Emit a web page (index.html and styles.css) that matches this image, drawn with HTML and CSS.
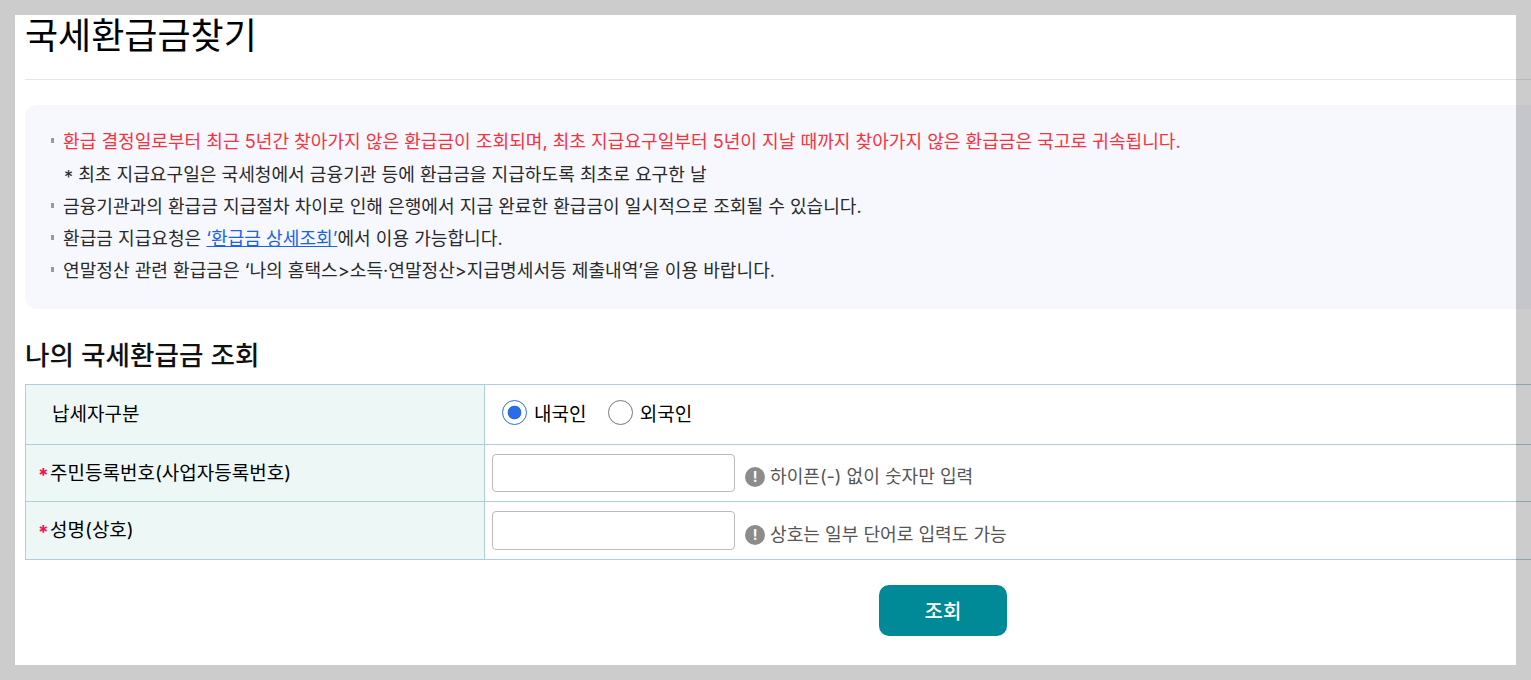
FILE: index.html
```html
<!DOCTYPE html>
<html lang="ko">
<head>
<meta charset="utf-8">
<title>국세환급금찾기</title>
<link rel="stylesheet" href="styles.css">
</head>
<body>
<main class="page">
  <h1 class="title">국세환급금찾기</h1>
  <section class="notice">
    <ul class="notice-list">
      <li class="item warn">환급 결정일로부터 최근 5년간 찾아가지 않은 환급금이 조회되며, 최초 지급요구일부터 5년이 지날 때까지 찾아가지 않은 환급금은 국고로 귀속됩니다.</li>
      <li class="item plain"><span class="star">*</span> 최초 지급요구일은 국세청에서 금융기관 등에 환급금을 지급하도록 최초로 요구한 날</li>
      <li class="item">금융기관과의 환급금 지급절차 차이로 인해 은행에서 지급 완료한 환급금이 일시적으로 조회될 수 있습니다.</li>
      <li class="item">환급금 지급요청은 <a class="link" href="#">‘환급금 상세조회’</a>에서 이용 가능합니다.</li>
      <li class="item">연말정산 관련 환급금은 ‘나의 홈택스&gt;소득·연말정산&gt;지급명세서등 제출내역’을 이용 바랍니다.</li>
    </ul>
  </section>
  <h2 class="subtitle">나의 국세환급금 조회</h2>
  <table class="form">
    <tr class="row-a">
      <th class="label"><span class="nomark">납세자구분</span></th>
      <td class="field radios">
        <label class="radio"><span class="dot on"></span>내국인</label>
        <label class="radio"><span class="dot"></span>외국인</label>
      </td>
    </tr>
    <tr class="row-b">
      <th class="label"><span class="req">*</span>주민등록번호(사업자등록번호)</th>
      <td class="field">
        <div class="inline">
          <input class="input" type="text">
          <span class="hint"><span class="bang">!</span>하이픈(-) 없이 숫자만 입력</span>
        </div>
      </td>
    </tr>
    <tr class="row-c">
      <th class="label"><span class="req">*</span>성명(상호)</th>
      <td class="field">
        <div class="inline">
          <input class="input tall" type="text">
          <span class="hint low"><span class="bang">!</span>상호는 일부 단어로 입력도 가능</span>
        </div>
      </td>
    </tr>
  </table>
  <div class="actions"><button class="btn" type="button">조회</button></div>
</main>
<div class="frame"></div>
</body>
</html>
```
FILE: styles.css
```css
* { box-sizing: border-box; }
html, body { margin: 0; height: 680px; overflow: hidden; background: #fff; }
body { font-family: "Inter", "Noto Sans CJK KR", sans-serif; color: #222; position: relative; }
.page { width: 1836px; margin-left: 25px; padding-top: 15px; }
.title { margin: 0; height: 65px; border-bottom: 1px solid #e6e6e6; font-size: 36px; font-weight: 400; line-height: 42px; color: #000; }
.notice { margin-top: 25px; height: 204px; padding: 20px 25px 0; background: #f7f8fe; border-radius: 12px; }
.notice-list { list-style: none; margin: 0; padding: 0; }
.item { position: relative; height: 32px; line-height: 32px; padding-left: 13px; font-size: 18.1px; white-space: nowrap; color: #2a2a2a; }
.item::before { content: ""; position: absolute; left: 1px; top: 13px; width: 3px; height: 5px; background: #999; }
.item.plain::before { display: none; }
.star { display: inline-block; margin-left: 1px; vertical-align: -3px; line-height: 1; }
.warn { height: 33px; color: #f5333f; }
.link { color: #1a62e8; text-decoration: underline; }
.subtitle { margin: 28px 0 0; height: 47px; font-size: 26.6px; font-weight: 500; line-height: 36px; color: #111; }
.form { border-collapse: collapse; width: 100%; table-layout: fixed; }
.form th, .form td { border: 1px solid #acd0d6; padding: 0; }
.row-a { height: 60px; }
.row-b { height: 57px; }
.row-c { height: 58px; }
.label { width: 459px; background: #edf7f6; font-size: 19px; font-weight: 400; text-align: left; padding: 0 0 4px 12px !important; color: #000; }
.nomark { padding-left: 14px; }
.req { display: inline-block; width: 12px; color: #f0134f; font-weight: 700; vertical-align: -2px; line-height: 1; }
.field { padding-left: 7px !important; }
.radios { padding-left: 17px !important; font-size: 19px; }
.radio { display: inline-flex; align-items: center; gap: 7px; margin-right: 16px; color: #000; }
.dot { width: 25px; height: 25px; border-radius: 50%; border: 1px solid #777; background: #fff; }
.dot.on { border-color: #2b6de8; background: radial-gradient(circle, #2b6de8 0 6.5px, #fff 7.2px); }
.inline { display: flex; align-items: flex-start; gap: 10px; }
.input { width: 243px; height: 38px; border: 1px solid #bbb; border-radius: 4px; background: #fff; }
.input.tall { height: 39px; }
.hint { display: flex; align-items: center; gap: 5px; margin-top: 9px; font-size: 18.1px; line-height: 26px; color: #555; }
.hint.low { margin-top: 10px; }
.bang { width: 20px; height: 20px; margin-top: 2px; border-radius: 50%; background: #8c8c8c; color: #fff; font-size: 14px; font-weight: 700; line-height: 20px; text-align: center; }
.actions { display: flex; justify-content: center; margin-top: 25px; }
.btn { width: 128px; height: 51px; border: 0; border-radius: 10px; background: #008996; color: #fff; font-family: inherit; font-size: 20px; font-weight: 500; }
.frame { position: absolute; left: 0; top: 0; width: 1531px; height: 680px; border: solid rgba(0,0,0,.2); border-width: 15px; pointer-events: none; }
```
